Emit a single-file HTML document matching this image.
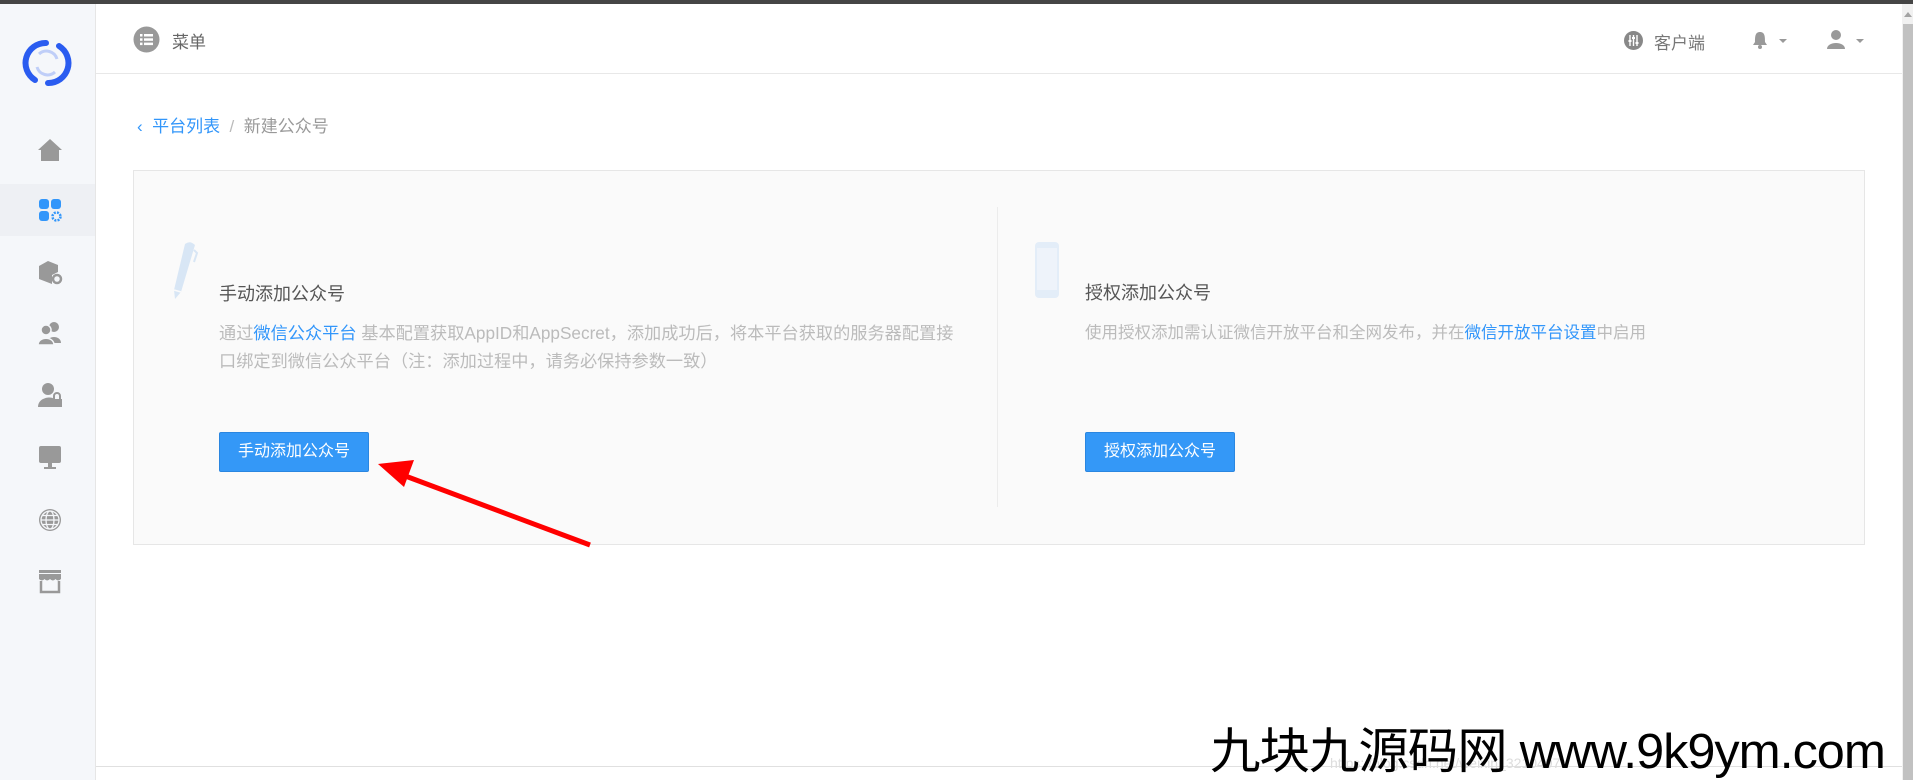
<!DOCTYPE html>
<html><head><meta charset="utf-8"><style>
*{margin:0;padding:0;box-sizing:border-box}
body{width:1913px;height:780px;overflow:hidden;background:#fff;font-family:"Liberation Sans","Noto Sans CJK SC",sans-serif;position:relative}
.abs{position:absolute}
.topbar{left:0;top:0;width:1913px;height:4px;background:#454545}
.side{left:0;top:4px;width:96px;height:776px;background:#f5f7fa;border-right:1px solid #e6e6e6}
.ic{position:absolute;left:36px;width:28px;height:28px}
.hdr{left:96px;top:73px;width:1806px;height:1px;background:#e8e8e8}
.g{color:#666}
.card{left:133px;top:170px;width:1732px;height:375px;background:#fafafa;border:1px solid #e6e6e6}
.ttl{font-size:18px;color:#555;white-space:nowrap}
.desc{font-size:16.5px;color:#bbb;line-height:28px;width:724px}
.blue{color:#3296fa}
.btn{background:#3498f7;border:1px solid #2a86e0;border-radius:2px;color:#fff;font-size:16px;text-align:center;line-height:38px;height:40px}
</style></head><body>
<div class="abs topbar"></div>
<div class="abs side">
  <div class="abs" style="left:0;top:180px;width:95px;height:52px;background:#eef0f4"></div>
</div>
<!-- logo -->
<svg class="abs" style="left:22px;top:38px" width="50" height="50" viewBox="0 0 50 50">
<path d="M24 5 A20 20 0 0 0 13 42" fill="none" stroke="#2a5cf0" stroke-width="6" stroke-linecap="round"/>
<path d="M26 45 A20 20 0 0 0 37 8" fill="none" stroke="#2a5cf0" stroke-width="6" stroke-linecap="round"/>
<path d="M17 16 A11 11 0 0 1 35 21" fill="none" stroke="#8aa6f5" stroke-width="3" opacity=".5"/>
<path d="M33 34 A11 11 0 0 1 15 29" fill="none" stroke="#8aa6f5" stroke-width="3" opacity=".5"/>
</svg>
<!-- sidebar icons -->
<svg class="ic" style="top:136px" viewBox="0 0 28 28"><path d="M14 3 L26 14 L23 14 L23 25 L5 25 L5 14 L2 14 Z" fill="#999"/></svg>
<svg class="ic" style="top:196px" viewBox="0 0 28 28"><rect x="3" y="3" width="10" height="10" rx="3" fill="#3296fa"/><rect x="15" y="3" width="10" height="10" rx="3" fill="#3296fa"/><rect x="3" y="15" width="10" height="10" rx="3" fill="#3296fa"/><circle cx="20.5" cy="20.5" r="4" fill="none" stroke="#3296fa" stroke-width="2.5" stroke-dasharray="2 1.2"/></svg>
<svg class="ic" style="top:258px" viewBox="0 0 28 28"><path d="M12 3 L22 7 L22 14 L16 17 L16 26 L3 21 L3 8 Z" fill="#999"/><circle cx="21" cy="21" r="4" fill="none" stroke="#999" stroke-width="2.5"/></svg>
<svg class="ic" style="top:319px" viewBox="0 0 28 28"><circle cx="18" cy="8" r="5" fill="#999"/><path d="M11 24 C11 16 25 16 25 24Z" fill="#999"/><circle cx="10" cy="11" r="5" fill="#999" stroke="#f5f7fa" stroke-width="1.5"/><path d="M2 26 C2 17 18 17 18 26Z" fill="#999" stroke="#f5f7fa" stroke-width="1.5"/></svg>
<svg class="ic" style="top:381px" viewBox="0 0 28 28"><circle cx="12" cy="8" r="6" fill="#999"/><path d="M2 26 C2 16 16 15 18 18 L18 26Z" fill="#999"/><rect x="16" y="18" width="10" height="8" fill="#999"/><path d="M18 18 V15 A3 3 0 0 1 24 15 V18" fill="none" stroke="#999" stroke-width="2"/></svg>
<svg class="ic" style="top:443px" viewBox="0 0 28 28"><rect x="3" y="3" width="22" height="17" rx="2" fill="#999"/><rect x="12" y="20" width="4" height="4" fill="#999"/><rect x="8" y="24" width="12" height="2" fill="#999"/></svg>
<svg class="ic" style="top:506px" viewBox="0 0 28 28"><circle cx="14" cy="14" r="11" fill="#999"/><g fill="none" stroke="#f5f7fa" stroke-width="1.3"><circle cx="14" cy="14" r="9"/><ellipse cx="14" cy="14" rx="4" ry="9"/><path d="M5 14 H23 M6 9.5 H22 M6 18.5 H22"/></g></svg>
<svg class="ic" style="top:567px" viewBox="0 0 28 28"><rect x="3" y="3" width="22" height="3" fill="#999"/><path d="M3 7 H25 L25 12 Q22 15 19.5 12 Q17 15 14 12 Q11 15 8.5 12 Q6 15 3 12Z" fill="#999"/><path d="M5 14 V25 H23 V14" fill="none" stroke="#999" stroke-width="2.5"/></svg>

<!-- header -->
<div class="abs hdr"></div>
<svg class="abs" style="left:133px;top:26px" width="27" height="27" viewBox="0 0 27 27"><circle cx="13.5" cy="13.5" r="13" fill="#999"/><g fill="#fff"><rect x="7" y="8" width="2.5" height="2.5"/><rect x="11" y="8" width="9" height="2.5"/><rect x="7" y="12.3" width="2.5" height="2.5"/><rect x="11" y="12.3" width="9" height="2.5"/><rect x="7" y="16.6" width="2.5" height="2.5"/><rect x="11" y="16.6" width="9" height="2.5"/></g></svg>
<div class="abs g" style="left:172px;top:28px;font-size:17px">菜单</div>
<svg class="abs" style="left:1624px;top:31px" width="19" height="19" viewBox="0 0 19 19"><circle cx="9.5" cy="9.5" r="9.5" fill="#888"/><g stroke="#fff" stroke-width="1.4"><path d="M6 4v11M9.5 4v11M13 4v11"/></g><g fill="#fff"><rect x="4.5" y="9" width="3" height="2"/><rect x="8" y="6" width="3" height="2"/><rect x="11.5" y="11" width="3" height="2"/></g></svg>
<div class="abs g" style="left:1654px;top:29px;font-size:17px;color:#777">客户端</div>
<svg class="abs" style="left:1752px;top:30px" width="40" height="20" viewBox="0 0 40 20"><path d="M8 2 C3 2 3 7 3 12 L1 15 H15 L13 12 C13 7 13 2 8 2Z" fill="#999"/><circle cx="8" cy="17" r="2" fill="#999"/><path d="M27 9 H35 L31 13Z" fill="#999"/></svg>
<svg class="abs" style="left:1826px;top:29px" width="40" height="22" viewBox="0 0 40 22"><circle cx="10" cy="6" r="5" fill="#999"/><path d="M1 20 C1 12 19 12 19 20Z" fill="#999"/><path d="M30 10 H38 L34 14Z" fill="#999"/></svg>
<!-- scrollbar -->
<div class="abs" style="left:1902px;top:4px;width:11px;height:776px;background:#f1f1f1"></div>
<div class="abs" style="left:1903px;top:24px;width:10px;height:756px;background:#c1c1c1"></div>
<svg class="abs" style="left:1903px;top:10px" width="10" height="8"><path d="M1 7 L5 2 L9 7Z" fill="#a3a3a3"/></svg>

<!-- breadcrumb -->
<div class="abs" style="left:137px;top:112px;font-size:17px;white-space:nowrap"><span class="blue">&lsaquo;&nbsp; 平台列表</span><span style="color:#bbb">&nbsp;&nbsp;/&nbsp;&nbsp;</span><span style="color:#999">新建公众号</span></div>

<!-- card -->
<div class="abs card"></div>
<div class="abs" style="left:997px;top:207px;width:1px;height:300px;background:#ececec"></div>
<svg class="abs" style="left:166px;top:240px" width="34" height="62" viewBox="0 0 34 62"><path d="M19 4 Q24 0 29 5 L15 52 L9 59 L8 50 Z" fill="#d8e6f5"/><path d="M8 50 L15 52" stroke="#fafafa" stroke-width="1.5"/><path d="M28 10 L31 13 L28 22" fill="none" stroke="#d8e6f5" stroke-width="2"/></svg>
<div class="abs ttl" style="left:219px;top:280px">手动添加公众号</div>
<div class="abs desc" style="left:219px;top:319px;font-size:17.2px;width:745px">通过<span class="blue">微信公众平台</span> 基本配置获取AppID和AppSecret，添加成功后，将本平台获取的服务器配置接口绑定到微信公众平台（注：添加过程中，请务必保持参数一致）</div>
<div class="abs btn" style="left:219px;top:432px;width:150px">手动添加公众号</div>

<svg class="abs" style="left:1034px;top:241px" width="26" height="58" viewBox="0 0 26 58"><rect x="1" y="1" width="24" height="56" rx="4" fill="#e3edf8"/><rect x="3" y="7" width="20" height="42" fill="#eef3fa"/></svg>
<div class="abs ttl" style="left:1085px;top:279px">授权添加公众号</div>
<div class="abs desc" style="left:1085px;top:319px;width:760px">使用授权添加需认证微信开放平台和全网发布，并在<span class="blue">微信开放平台设置</span>中启用</div>
<div class="abs btn" style="left:1085px;top:432px;width:150px">授权添加公众号</div>

<!-- arrow -->
<svg class="abs" style="left:0;top:0" width="1913" height="780"><line x1="590" y1="545" x2="400" y2="474" stroke="#f00" stroke-width="5"/><path d="M378 464 L414 460 L404 487Z" fill="#f00"/></svg>

<!-- footer -->
<div class="abs" style="left:96px;top:766px;width:1806px;height:1px;background:#e0e0e0"></div>
<div class="abs" style="left:1330px;top:755px;font-size:14px;color:#ddd">https://blog.csdn.net/weixin_3210497</div>
<div class="abs" style="left:1210px;top:712px;font-size:49px;color:#000;white-space:nowrap;letter-spacing:-1px;transform:scaleX(1.03);transform-origin:left">九块九源码网 www.9k9ym.com</div>
</body></html>
